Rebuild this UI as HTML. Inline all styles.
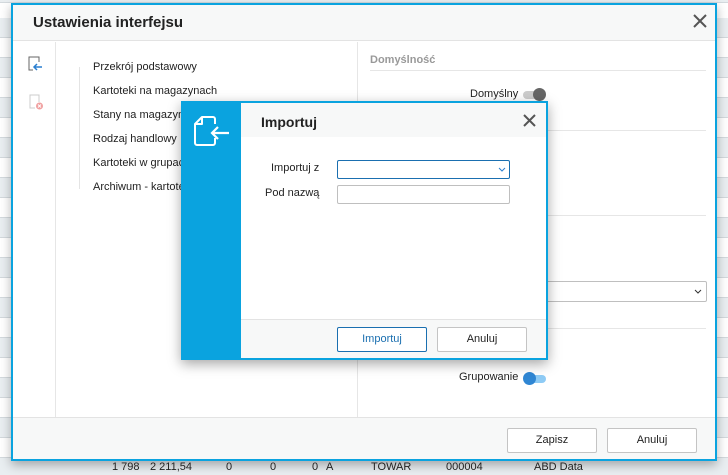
<!DOCTYPE html>
<html><head><meta charset="utf-8"><style>
*{box-sizing:border-box;margin:0;padding:0}
body{width:728px;height:475px;overflow:hidden;position:relative;font-family:"Liberation Sans",sans-serif;font-size:12px;color:#222;
background:repeating-linear-gradient(180deg,#e9eef1 0,#e9eef1 19px,#d3d9dd 19px,#d3d9dd 20px,#fff 20px,#fff 39px,#d3d9dd 39px,#d3d9dd 40px);background-position:0 18px;}
.abs{position:absolute}
.outer{left:11px;top:3px;width:706px;height:458px;border:2px solid #0aa3df;background:#fff;box-shadow:0 4px 10px rgba(0,0,0,.3)}
.hdr{left:0;top:0;right:0;height:36px;background:#f7f8f8;border-bottom:1px solid #e3e3e3}
.title{left:20px;top:9px;font-size:15px;font-weight:bold;color:#222}
.line{background:#e6e6e6}
.tree div{position:absolute;left:80px;font-size:11px;color:#222}
.btn{position:absolute;height:25px;border:1px solid #c4c4c4;border-radius:2px;background:#fff;font-size:11px;text-align:center;line-height:23px}
.inner{left:181px;top:101px;width:367px;height:259px;border:2px solid #0aa3df;background:#0aa3df;box-shadow:0 4px 12px rgba(0,0,0,.35)}
.ibody{left:58px;top:0;right:0;bottom:0;background:#fff}
.inp{position:absolute;height:19px;border:1px solid #bfbfbf;border-radius:2px;background:#fff}
</style></head><body>
<div class="abs outer">
 <div class="abs hdr"><div class="abs title">Ustawienia interfejsu</div>
  <svg class="abs" style="left:680px;top:9px" width="14" height="14" viewBox="0 0 14 14"><path d="M1 1L13 13M13 1L1 13" stroke="#555" stroke-width="2"/></svg></div>
 <div class="abs line" style="left:42px;top:37px;width:1px;height:376px"></div>
 <div class="abs line" style="left:344px;top:37px;width:1px;height:376px"></div>
 <svg class="abs" style="left:14px;top:50px" width="18" height="18" viewBox="0 0 18 18"><path d="M6 15H2V2H12V7" fill="none" stroke="#666" stroke-width="1"/><path d="M15 12H7M10 9L7 12L10 15" fill="none" stroke="#2a7fd0" stroke-width="1.5"/></svg>
 <svg class="abs" style="left:14px;top:88px" width="18" height="18" viewBox="0 0 18 18"><path d="M8 15H3V2H12V9" fill="none" stroke="#ccc" stroke-width="1"/><circle cx="12.5" cy="13" r="3.5" fill="#f0a0a0"/><path d="M11 11.5l3 3M14 11.5l-3 3" stroke="#fff" stroke-width="1"/></svg>
 <div class="abs line" style="left:66px;top:62px;width:1px;height:122px;background:#e4e4e4"></div>
 <div class="tree">
  <div style="top:56px">Przekrój podstawowy</div>
  <div style="top:80px">Kartoteki na magazynach</div>
  <div style="top:104px">Stany na magazynach</div>
  <div style="top:128px">Rodzaj handlowy</div>
  <div style="top:152px">Kartoteki w grupach</div>
  <div style="top:176px">Archiwum - kartoteki</div>
 </div>
 <div class="abs" style="left:357px;top:49px;font-size:11px;font-weight:bold;color:#999">Domyślność</div>
 <div class="abs line" style="left:357px;top:65px;width:336px;height:1px"></div>
 <div class="abs" style="left:457px;top:83px;font-size:11px">Domyślny</div>
 <div class="abs" style="left:510px;top:86px;width:20px;height:8px;border-radius:4px;background:#ccc"></div>
 <div class="abs" style="left:520px;top:83px;width:13px;height:13px;border-radius:50%;background:#666"></div>
 <div class="abs line" style="left:357px;top:125px;width:336px;height:1px"></div>
 <div class="abs line" style="left:357px;top:210px;width:336px;height:1px"></div>
 <div class="inp" style="left:344px;top:276px;width:350px;height:21px"><svg class="abs" style="right:4px;top:7px" width="8" height="6"><path d="M1 1L4 4L7 1" fill="none" stroke="#333"/></svg></div>
 <div class="abs line" style="left:357px;top:323px;width:336px;height:1px"></div>
 <div class="abs" style="left:446px;top:366px;font-size:11px">Grupowanie</div>
 <div class="abs" style="left:513px;top:370px;width:20px;height:8px;border-radius:4px;background:#8ecbf5"></div>
 <div class="abs" style="left:510px;top:367px;width:13px;height:13px;border-radius:50%;background:#2f86d3"></div>
 <div class="abs" style="left:0;top:412px;right:0;bottom:0;background:#f7f8f8;border-top:1px solid #e3e3e3"></div>
 <div class="btn" style="left:494px;top:423px;width:90px">Zapisz</div>
 <div class="btn" style="left:594px;top:423px;width:90px">Anuluj</div>
</div>
<div class="abs" style="top:461px;left:0;width:728px;font-size:11px;color:#222">
 <span class="abs" style="left:112px">1 798</span><span class="abs" style="left:150px">2 211,54</span><span class="abs" style="left:226px">0</span><span class="abs" style="left:270px">0</span><span class="abs" style="left:312px">0</span><span class="abs" style="left:326px">A</span><span class="abs" style="left:371px">TOWAR</span><span class="abs" style="left:446px">000004</span><span class="abs" style="left:534px">ABD Data</span>
</div>
<div class="abs inner">
 <svg class="abs" style="left:10px;top:12px" width="40" height="34" viewBox="0 0 40 34"><path d="M9 2H20a2 2 0 0 1 2 2V9M22 23V28a2 2 0 0 1-2 2H4a2 2 0 0 1-2-2V9L9 2V9H2" fill="none" stroke="#fff" stroke-width="2" stroke-linejoin="round"/><path d="M36 18H19M25 12L19 18L25 24" fill="none" stroke="#fff" stroke-width="2.2"/></svg>
 <div class="abs ibody">
  <div class="abs" style="left:0;top:0;right:0;height:34px;background:#f7f8f8"></div>
  <div class="abs" style="left:20px;top:11px;font-size:14px;font-weight:bold">Importuj</div>
  <svg class="abs" style="left:282px;top:11px" width="13" height="13" viewBox="0 0 13 13"><path d="M1 1L12 12M12 1L1 12" stroke="#555" stroke-width="2"/></svg>
  <div class="abs" style="left:30px;top:59px;font-size:11px">Importuj z</div>
  <div class="abs" style="left:24px;top:84px;font-size:11px">Pod nazwą</div>
  <div class="inp" style="left:96px;top:57px;width:173px;border-color:#1a6fb0"><svg class="abs" style="right:3px;top:6px" width="8" height="6"><path d="M1 1L4 4L7 1" fill="none" stroke="#2a7fd0"/></svg></div>
  <div class="inp" style="left:96px;top:82px;width:173px"></div>
  <div class="abs" style="left:0;top:216px;right:0;bottom:0;background:#f7f8f8;border-top:1px solid #e3e3e3"></div>
  <div class="btn" style="left:96px;top:224px;width:90px;border-color:#1a6fb0;color:#1a6fb0">Importuj</div>
  <div class="btn" style="left:196px;top:224px;width:90px">Anuluj</div>
 </div>
</div>
</body></html>
